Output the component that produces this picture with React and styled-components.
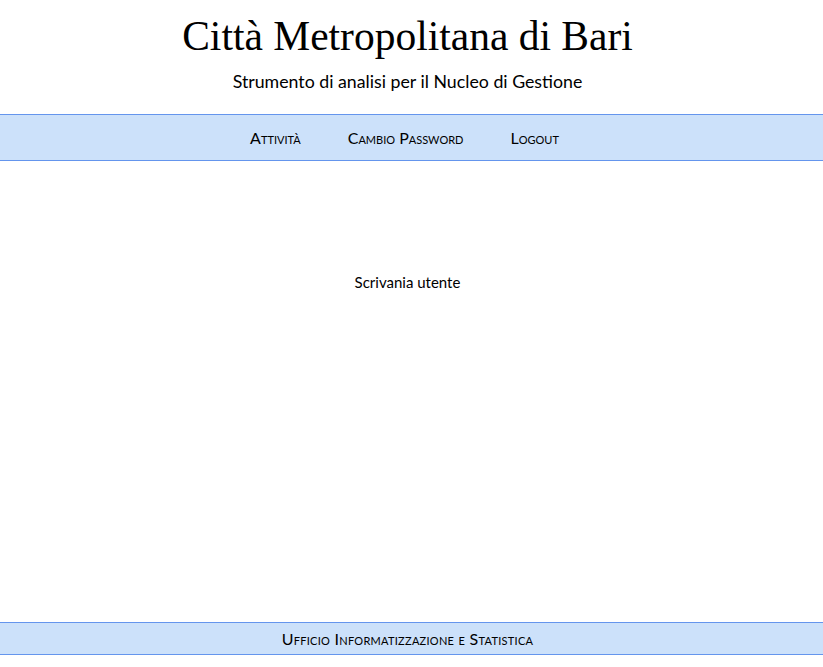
import React from "react";
import styled, { createGlobalStyle } from "styled-components";

const GlobalStyle = createGlobalStyle`
  html, body {
    margin: 0;
    padding: 0;
    background: #fff;
  }
  body {
    font-family: Lato, "Open Sans", sans-serif;
    color: #000;
  }
`;

export default function App() {
  return (
    <>
      <GlobalStyle />
      <Page>
        <Header>
          <Title>Città Metropolitana di Bari</Title>
          <Subtitle>Strumento di analisi per il Nucleo di Gestione</Subtitle>
        </Header>

        <NavBar>
          <NavLink href="#">Attività</NavLink>
          <NavLink href="#">Cambio Password</NavLink>
          <NavLink href="#">Logout</NavLink>
        </NavBar>

        <Main>
          <Desk>Scrivania utente</Desk>
        </Main>

        <Footer>Ufficio Informatizzazione e Statistica</Footer>
      </Page>
    </>
  );
}

// content is centred a little left of the window centre, as in the original
const Page = styled.div`
  min-height: 100vh;
  display: flex;
  flex-direction: column;
  box-sizing: border-box;
  padding-bottom: 12px;
`;

const Header = styled.header`
  text-align: center;
  padding: 12px 8px 22px 0;
`;

const Title = styled.h1`
  margin: 0;
  font-family: "Liberation Serif", "Times New Roman", serif;
  font-weight: normal;
  font-size: 41.5px;
  line-height: 48px;
`;

const Subtitle = styled.p`
  margin: 10px 0 0;
  font-size: 17.75px;
  line-height: 22px;
`;

const NavBar = styled.nav`
  display: flex;
  justify-content: center;
  gap: 47px;
  height: 45px;
  align-items: center;
  padding-right: 14px;
  background: #cce1fa;
  border-top: 1px solid #6495ed;
  border-bottom: 1px solid #6495ed;
`;

const NavLink = styled.a`
  font-variant: small-caps;
  font-size: 16px;
  color: #000;
  text-decoration: none;
`;

const Main = styled.main`
  flex: 1;
  text-align: center;
  padding: 111px 8px 0 0;
`;

const Desk = styled.p`
  margin: 0;
  font-size: 15px;
  line-height: 20px;
`;

const Footer = styled.footer`
  background: #cce1fa;
  border-top: 1px solid #6495ed;
  border-bottom: 1px solid #6495ed;
  height: 31px;
  padding-right: 8px;
  display: flex;
  align-items: center;
  justify-content: center;
  font-variant: small-caps;
  font-size: 16px;
  letter-spacing: 0.27px;
`;
